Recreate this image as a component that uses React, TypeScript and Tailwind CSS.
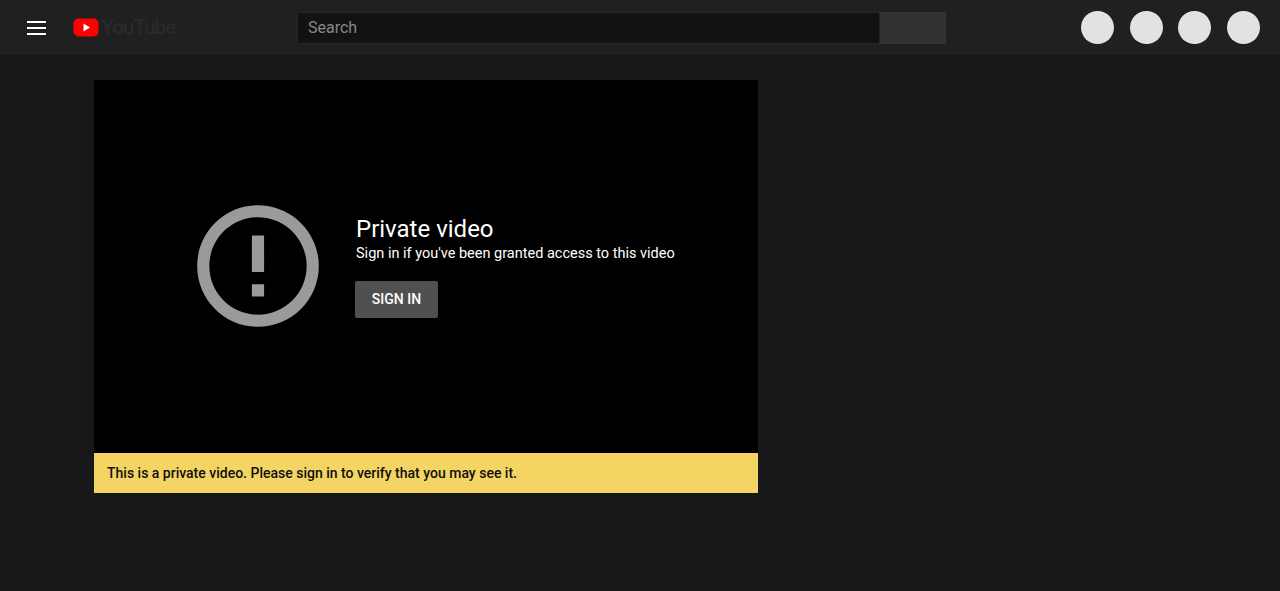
import React from 'react';

function Logo() {
  return (
    <div className="flex items-center">
      <svg width="26" height="19" viewBox="0 0 26 19" className="shrink-0">
        <rect x="0.5" y="0.5" width="25" height="18" rx="5" fill="#ff0000" />
        <path d="M10.5 5.6L17 9.5L10.5 13.4Z" fill="#ffffff" />
      </svg>
      <span className="ml-[2px] font-['Roboto',sans-serif] text-[21px] leading-none font-medium tracking-[-1.2px] text-[#2a2a2a]">
        YouTube
      </span>
    </div>
  );
}

function Avatar() {
  return <div className="w-[33px] h-[33px] rounded-full bg-[#e2e2e2]" />;
}

export default function App() {
  return (
    <div className="w-[1280px] h-[591px] overflow-hidden bg-[#181818] font-['Roboto',sans-serif]">
      <header className="flex items-center h-[55px] bg-[#202020] pl-[27px] pr-[20px]">
        <div className="flex flex-col gap-[4px] w-[19px] shrink-0">
          <div className="h-[2px] bg-white" />
          <div className="h-[2px] bg-white" />
          <div className="h-[2px] bg-white" />
        </div>
        <div className="ml-[27px] w-[224px] shrink-0">
          <Logo />
        </div>
        <div className="flex h-[32px] w-[649px] shrink-0">
          <div className="flex items-center w-[583px] bg-[#121212] border border-[#262626] pl-[10px] text-[16px] text-[#888888]">
            Search
          </div>
          <div className="w-[66px] bg-[#323232]" />
        </div>
        <div className="ml-auto flex gap-[15.7px]">
          <Avatar />
          <Avatar />
          <Avatar />
          <Avatar />
        </div>
      </header>
      <main className="pl-[94px] pt-[25px]">
        <div className="w-[664px]">
          <div className="flex items-center h-[373px] bg-black pl-[91px] pb-[1px]">
            <svg width="146" height="146" viewBox="0 0 24 24" fill="#9a9a9a" className="shrink-0">
              <path d="M11 15h2v2h-2zm0-8h2v6h-2zm.99-5C6.47 2 2 6.48 2 12s4.47 10 9.99 10C17.52 22 22 17.52 22 12S17.52 2 11.99 2zM12 20c-4.42 0-8-3.58-8-8s3.58-8 8-8 8 3.58 8 8-3.58 8-8 8z" />
            </svg>
            <div className="ml-[24px] flex flex-col items-start">
              <div className="text-[24px] leading-[28px] text-white ml-[1px]">Private video</div>
              <div className="text-[14.5px] leading-[20px] text-white ml-[1px] mt-[1px]">
                Sign in if you've been granted access to this video
              </div>
              <button className="mt-[17px] w-[83px] h-[37px] rounded-[2px] bg-[#505050] text-[14px] font-medium text-white">
                SIGN IN
              </button>
            </div>
          </div>
          <div className="flex items-center h-[40px] bg-[#f4d563] pl-[13px] text-[14px] font-medium text-[#0f0f0f]">
            This is a private video. Please sign in to verify that you may see it.
          </div>
        </div>
      </main>
    </div>
  );
}
